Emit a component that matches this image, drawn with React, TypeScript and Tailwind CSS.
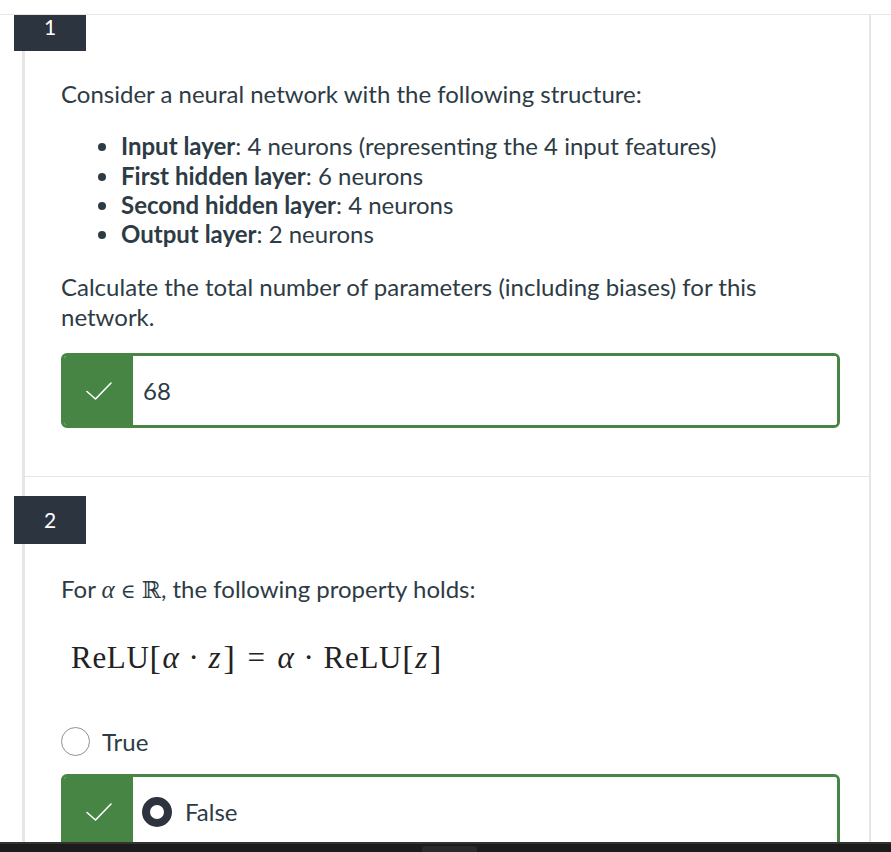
import type { ReactNode } from "react";

const ink = "text-[#2d3b45]";

function Check() {
  return (
    <svg width="26" height="18" viewBox="0 0 26 18" fill="none" aria-hidden>
      <path d="M1 9.5 L9.5 17 L25 1" stroke="white" strokeWidth="1.6" strokeLinecap="round" strokeLinejoin="round" />
    </svg>
  );
}

function Badge({ n, className }: { n: number; className?: string }) {
  return (
    <div
      className={`absolute left-[-11px] flex h-[48px] w-[72px] items-center justify-center bg-[#2c3440] text-[21px] text-white ${className ?? ""}`}
    >
      {n}
    </div>
  );
}

function CorrectBox({ children, className }: { children: ReactNode; className?: string }) {
  return (
    <div className={`flex overflow-hidden rounded-[6px] border-[3px] border-[#478545] ${className ?? ""}`}>
      <div className="flex w-[69px] shrink-0 items-center justify-center bg-[#478545]">
        <Check />
      </div>
      <div className="flex flex-1 items-center bg-white">{children}</div>
    </div>
  );
}

const Alpha = () => <span className="font-['Liberation_Serif'] text-[25px] italic">α</span>;

export default function App() {
  return (
    <div className={`relative h-[852px] w-[891px] overflow-hidden bg-white font-['Lato',sans-serif] ${ink}`}>
      <div className="h-[15px] border-b border-[#e6e6e6]" />
      <div className="h-[837px] overflow-hidden">
        <div className="ml-[22px] mr-[20px] border-l-[3px] border-r-2 border-[#e6e6e6]">
          {/* question 1 */}
          <section className="relative h-[462px] border-b border-[#e6e6e6] pl-[36px] pr-[29px] pt-[64px] text-[24px] leading-[29.3px]">
            <Badge n={1} className="top-[-12px]" />
            <p>Consider a neural network with the following structure:</p>
            <ul className="mt-[23px] list-disc pl-[60px]">
              <li>
                <b>Input layer</b>: 4 neurons (representing the 4 input features)
              </li>
              <li>
                <b>First hidden layer</b>: 6 neurons
              </li>
              <li>
                <b>Second hidden layer</b>: 4 neurons
              </li>
              <li>
                <b>Output layer</b>: 2 neurons
              </li>
            </ul>
            <p className="mt-[24px]">
              Calculate the total number of parameters (including biases) for this network.
            </p>
            <CorrectBox className="mt-[22px] h-[75px]">
              <span className="pl-[10px]">68</span>
            </CorrectBox>
          </section>

          {/* question 2 */}
          <section className="relative pl-[36px] pr-[29px] pt-[97px] text-[24px] leading-[29.3px]">
            <Badge n={2} className="top-[19px]" />
            <p>
              For <Alpha /> <span className="font-['DejaVu_Serif'] text-[20px]">∈</span>{" "}
              <span className="font-['DejaVu_Serif'] text-[23px]">ℝ</span>, the following property holds:
            </p>
            <div className="mt-[34px] flex items-center pl-[10px] font-['Liberation_Serif'] text-[31px] leading-[36px] tracking-[0.7px] text-[#222]">
              <span>ReLU</span>
              <span className="text-[34px]">[</span>
              <i className="ml-[1px]">α</i>
              <span className="mx-[9px]">·</span>
              <i>z</i>
              <span className="ml-[2px] text-[34px]">]</span>
              <span className="mx-[12px]">=</span>
              <i>α</i>
              <span className="mx-[9px]">·</span>
              <span>ReLU</span>
              <span className="text-[34px]">[</span>
              <i className="ml-[1px]">z</i>
              <span className="ml-[2px] text-[34px]">]</span>
            </div>
            <label className="mt-[51px] flex items-center gap-[12px]">
              <span className="h-[29px] w-[29px] rounded-full border border-[#8b9298] bg-white" />
              <span>True</span>
            </label>
            <CorrectBox className="mt-[17px] h-[76px]">
              <span className="ml-[9px] h-[30px] w-[30px] rounded-full border-[8px] border-[#2d3440] bg-white" />
              <span className="pl-[13px]">False</span>
            </CorrectBox>
          </section>
        </div>
      </div>

      {/* window chrome overlay at bottom */}
      <div className="absolute bottom-0 left-0 h-[10px] w-full border-t-2 border-[#333] bg-[#1c1c1c]">
        <div className="absolute bottom-0 left-[422px] h-[6px] w-[55px] rounded-t-[4px] bg-[#2a2a2a]" />
      </div>
    </div>
  );
}
